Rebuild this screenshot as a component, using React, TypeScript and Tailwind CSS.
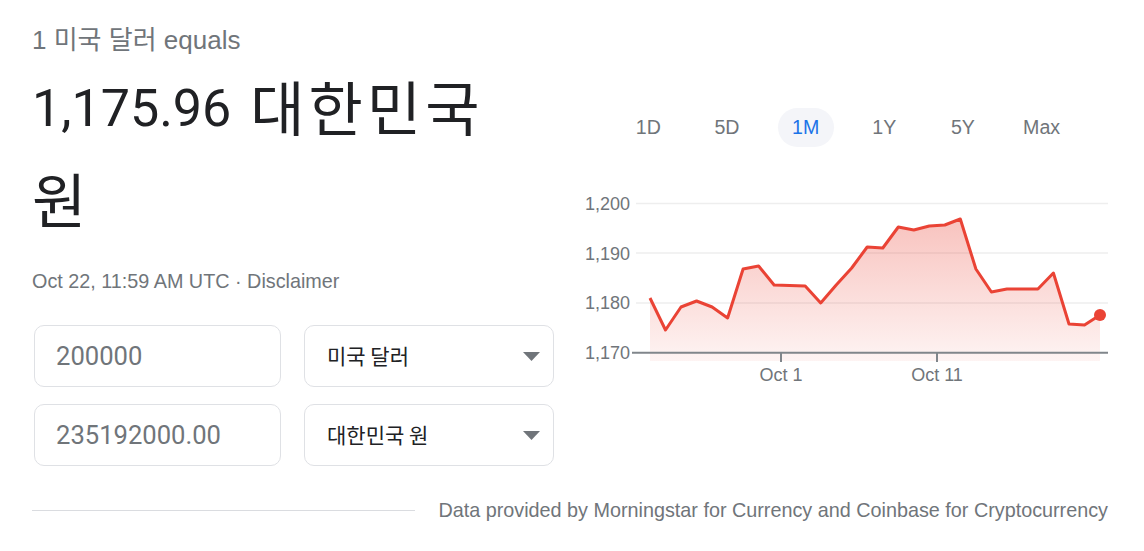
import React from "react";

const pts: number[] = [
  298, 330, 307, 301, 307, 318, 269, 266, 285, 285.5, 286, 303, 285, 268, 247, 248, 227, 230, 226, 225, 219,
  269, 292, 289, 289, 289, 273, 324, 325, 315,
];

function Chart() {
  // chart origin: page x 570, y 180
  const xy = pts.map((y, i) => [80 + i * ((1100 - 650) / 29), y - 180]);
  const line = xy.map(([x, y]) => `${x.toFixed(1)},${y}`).join(" ");
  const area = `80,181 ${line} 530,181`;
  const last = xy[xy.length - 1];
  const labels = [
    { t: "1,200", y: 30 },
    { t: "1,190", y: 80 },
    { t: "1,180", y: 129 },
    { t: "1,170", y: 179 },
  ];
  return (
    <svg width="550" height="215" viewBox="0 0 550 215" className="block">
      <defs>
        <linearGradient id="fill" x1="0" y1="39" x2="0" y2="181" gradientUnits="userSpaceOnUse">
          <stop offset="0" stopColor="#ea4335" stopOpacity="0.32" />
          <stop offset="1" stopColor="#ea4335" stopOpacity="0.06" />
        </linearGradient>
      </defs>
      {[23.5, 73, 123].map((y) => (
        <line key={y} x1="66" x2="538" y1={y} y2={y} stroke="#eeeeee" strokeWidth="1.5" />
      ))}
      <polygon points={area} fill="url(#fill)" />
      <line x1="62" x2="538" y1="172.7" y2="172.7" stroke="#80868b" strokeWidth="2" />
      <line x1="211" x2="211" y1="172" y2="182" stroke="#80868b" strokeWidth="2" />
      <line x1="367" x2="367" y1="172" y2="182" stroke="#80868b" strokeWidth="2" />
      <polyline points={line} fill="none" stroke="#ea4335" strokeWidth="3" strokeLinejoin="round" />
      <circle cx={last[0]} cy={last[1]} r="6" fill="#ea4335" />
      <g fill="#70757a" fontFamily="'Liberation Sans', Arial, sans-serif" fontSize="18">
        {labels.map((l) => (
          <text key={l.t} x="60" y={l.y} textAnchor="end">
            {l.t}
          </text>
        ))}
        <text x="211" y="201" textAnchor="middle">Oct 1</text>
        <text x="367" y="201" textAnchor="middle">Oct 11</text>
      </g>
    </svg>
  );
}

function Arrow() {
  return (
    <svg width="17" height="9" viewBox="0 0 17 9">
      <polygon points="0,0 17,0 8.5,9" fill="#70757a" />
    </svg>
  );
}

export default function App() {
  const tabs = ["1D", "5D", "1M", "1Y", "5Y", "Max"];
  return (
    <div className="w-[1144px] h-[551px] bg-white overflow-hidden font-['Liberation_Sans','Noto_Sans_CJK_KR',sans-serif]">
      <div className="flex items-start">
        {/* left column */}
        <div className="w-[570px] pl-[32px] pt-[24px]">
          <p className="text-[26px] leading-[32px] text-[#70757a]">1 미국 달러 equals</p>
          <div className="mt-[8px] text-[#202124]">
            <div className="h-[92px] flex items-center whitespace-nowrap">
              <span className="text-[52px] leading-none font-['Roboto',sans-serif] mt-[-2px]">1,175.96</span>
              <span className="text-[59px] leading-none tracking-[4px] font-['Noto_Sans_CJK_KR',sans-serif] ml-[19px] mt-[-10px]">대한민국</span>
            </div>
            <div className="h-[92px] flex items-center">
              <span className="text-[59px] leading-none font-['Noto_Sans_CJK_KR',sans-serif] mt-[-10px]">원</span>
            </div>
          </div>
          <p className="mt-[21px] text-[19.8px] leading-[24px] text-[#70757a]">Oct 22, 11:59 AM UTC · Disclaimer</p>

          <div className="mt-[32px] pl-[2px] flex flex-col gap-[17px]">
            {[
              ["200000", "미국 달러"],
              ["235192000.00", "대한민국 원"],
            ].map(([v, c]) => (
              <div key={v} className="flex gap-[23px]">
                <div className="w-[247px] h-[62px] rounded-[10px] border border-[#dfe1e5] flex items-center pl-[21px] text-[25.6px] text-[#70757a] font-['Roboto',sans-serif]">
                  {v}
                </div>
                <div className="w-[250px] h-[62px] rounded-[10px] border border-[#dfe1e5] flex items-center justify-between pl-[22px] pr-[13px]">
                  <span className="text-[21px] text-[#202124] font-['Noto_Sans_CJK_KR',sans-serif]">{c}</span>
                  <Arrow />
                </div>
              </div>
            ))}
          </div>
        </div>

        {/* right column */}
        <div className="w-[550px] pt-[108px]">
          <div className="flex ml-[39px]">
            {tabs.map((t) => (
              <div key={t} className="w-[78.67px] flex justify-center">
                <span
                  className={
                    t === "1M"
                      ? "w-[56px] h-[39px] rounded-full bg-[#f4f5f9] flex items-center justify-center text-[19.6px] text-[#1a73e8]"
                      : "w-[56px] h-[39px] rounded-full flex items-center justify-center text-[19.6px] text-[#70757a]"
                  }
                >
                  {t}
                </span>
              </div>
            ))}
          </div>
          <div className="mt-[33px]">
            <Chart />
          </div>
        </div>
      </div>

      {/* footer */}
      <div className="mt-[32px] flex items-center pl-[32px] pr-[36px]">
        <div className="w-[383px] h-px bg-[#dadce0]" />
        <p className="ml-auto text-[19.8px] leading-[24px] text-[#70757a]">
          Data provided by Morningstar for Currency and Coinbase for Cryptocurrency
        </p>
      </div>
    </div>
  );
}
